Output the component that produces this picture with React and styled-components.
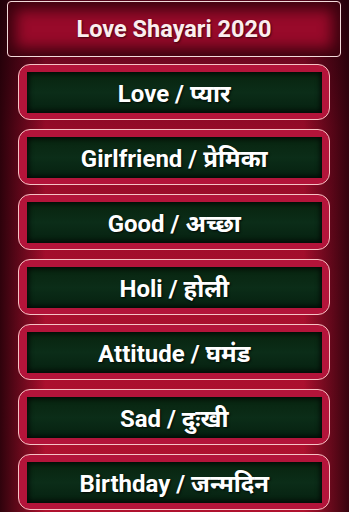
import styled, { createGlobalStyle } from 'styled-components';

const GlobalStyle = createGlobalStyle`
  html, body {
    margin: 0;
    padding: 0;
  }
  body {
    width: 349px;
    height: 512px;
    overflow: hidden;
    font-family: Roboto, "Noto Sans", "Liberation Sans", sans-serif;
    background: #4a0012;
  }
`;

const Screen = styled.div`
  width: 349px;
  height: 512px;
  overflow: hidden;
  box-sizing: border-box;
  padding: 1px 8px 0 7px;
  display: flex;
  flex-direction: column;
  background:
    linear-gradient(90deg, rgba(25, 0, 6, 0.85) 0%, rgba(25, 0, 6, 0) 13%, rgba(25, 0, 6, 0) 87%, rgba(25, 0, 6, 0.8) 100%),
    linear-gradient(180deg, #50051a 0%, #940b28 25%, #a80f2e 60%, #b0122f 100%);
`;

const Header = styled.div`
  height: 56px;
  box-sizing: border-box;
  border: 1.5px solid #f2dada;
  border-radius: 4px;
  display: flex;
  align-items: center;
  justify-content: center;
  background: #980a2a;
  box-shadow: inset 0 0 14px 8px rgba(35, 0, 8, 0.8);
`;

const Title = styled.h1`
  margin: 0;
  color: #fbeeee;
  font-size: 23.5px;
  font-weight: 700;
  text-shadow: 1px 1px 2px rgba(0, 0, 0, 0.6);
`;

const List = styled.div`
  display: flex;
  flex-direction: column;
  gap: 9px;
  padding: 7px 11px 0 11px;
`;

const Item = styled.div`
  height: 56px;
  flex-shrink: 0;
  box-sizing: border-box;
  border: 1.5px solid #f6c2c4;
  border-radius: 12px;
  background: #b3143a;
  padding: 6.5px 7px 6.5px 7.5px;
  display: flex;
`;

const Panel = styled.div`
  flex: 1;
  display: flex;
  align-items: center;
  justify-content: center;
  background: linear-gradient(180deg, #08240f 0%, #0b2d18 50%, #062010 100%);
  box-shadow: inset 0 0 5px 2px rgba(0, 0, 0, 0.75);
  color: #ffffff;
  font-size: 24px;
  font-weight: 700;
  text-shadow: 1px 1px 2px rgba(0, 0, 0, 0.8);
  white-space: nowrap;
`;

const categories = [
  'Love / प्यार',
  'Girlfriend / प्रेमिका',
  'Good / अच्छा',
  'Holi / होली',
  'Attitude / घमंड',
  'Sad / दुःखी',
  'Birthday / जन्मदिन',
];

export default function App() {
  return (
    <>
      <GlobalStyle />
      <Screen>
        <Header>
          <Title>Love Shayari 2020</Title>
        </Header>
        <List>
          {categories.map(name => (
            <Item key={name}>
              <Panel>{name}</Panel>
            </Item>
          ))}
        </List>
      </Screen>
    </>
  );
}
